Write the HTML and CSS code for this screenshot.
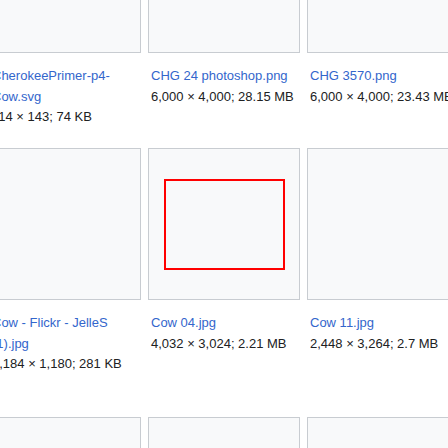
FILE: index.html
```html
<!DOCTYPE html>
<html lang="en">
<head>
<meta charset="utf-8">
<title>Gallery</title>
<link rel="stylesheet" href="styles.css">
</head>
<body>
<ul class="gallery">
  <li class="gallerybox">
    <div class="thumb"></div>
    <div class="gallerytext">
      <a class="file" href="#">CherokeePrimer-p4-Cow.svg</a>
      <div class="meta">114 × 143; 74 KB</div>
    </div>
  </li>
  <li class="gallerybox">
    <div class="thumb"></div>
    <div class="gallerytext">
      <a class="file" href="#">CHG 24 photoshop.png</a>
      <div class="meta">6,000 × 4,000; 28.15 MB</div>
    </div>
  </li>
  <li class="gallerybox">
    <div class="thumb"></div>
    <div class="gallerytext">
      <a class="file" href="#">CHG 3570.png</a>
      <div class="meta">6,000 × 4,000; 23.43 MB</div>
    </div>
  </li>
  <li class="gallerybox">
    <div class="thumb"></div>
    <div class="gallerytext">
      <a class="file" href="#">Cow - Flickr - JelleS (1).jpg</a>
      <div class="meta">1,184 × 1,180; 281 KB</div>
    </div>
  </li>
  <li class="gallerybox">
    <div class="thumb"><div class="image-outline"></div></div>
    <div class="gallerytext">
      <a class="file" href="#">Cow 04.jpg</a>
      <div class="meta">4,032 × 3,024; 2.21 MB</div>
    </div>
  </li>
  <li class="gallerybox">
    <div class="thumb"></div>
    <div class="gallerytext">
      <a class="file" href="#">Cow 11.jpg</a>
      <div class="meta">2,448 × 3,264; 2.7 MB</div>
    </div>
  </li>
  <li class="gallerybox">
    <div class="thumb"></div>
  </li>
  <li class="gallerybox">
    <div class="thumb"></div>
  </li>
  <li class="gallerybox">
    <div class="thumb"></div>
  </li>
</ul>
</body>
</html>
```
FILE: styles.css
```css
html, body {
  margin: 0;
  padding: 0;
  background: #ffffff;
  overflow: hidden;
}

body {
  font-family: "Liberation Sans", Arial, sans-serif;
  color: #202122;
  width: 448px;
  height: 448px;
}

.gallery {
  list-style: none;
  margin: -99px 0 0 -11px;
  padding: 0;
  display: grid;
  grid-template-columns: repeat(3, 152px);
  grid-template-rows: 247px 269px auto;
  column-gap: 7px;
  align-items: start;
}

.gallerybox {
  display: flex;
  flex-direction: column;
  min-width: 0;
}

.thumb {
  box-sizing: border-box;
  width: 152px;
  height: 152px;
  background: #f8f9fa;
  border: 1px solid #c8ccd1;
  display: flex;
  align-items: center;
  justify-content: center;
}

.image-outline {
  box-sizing: border-box;
  width: 121px;
  height: 91px;
  border: 2px solid #ff0000;
  background: #f8f9fa;
}

.gallerytext {
  padding: 13px 0 0 3px;
  font-size: 13px;
  line-height: 20.6px;
  white-space: normal;
  width: 200px;
}

.file {
  display: block;
  width: 147px;
  color: #3366cc;
  text-decoration: none;
}

.meta {
  white-space: nowrap;
  color: #202122;
}
```
